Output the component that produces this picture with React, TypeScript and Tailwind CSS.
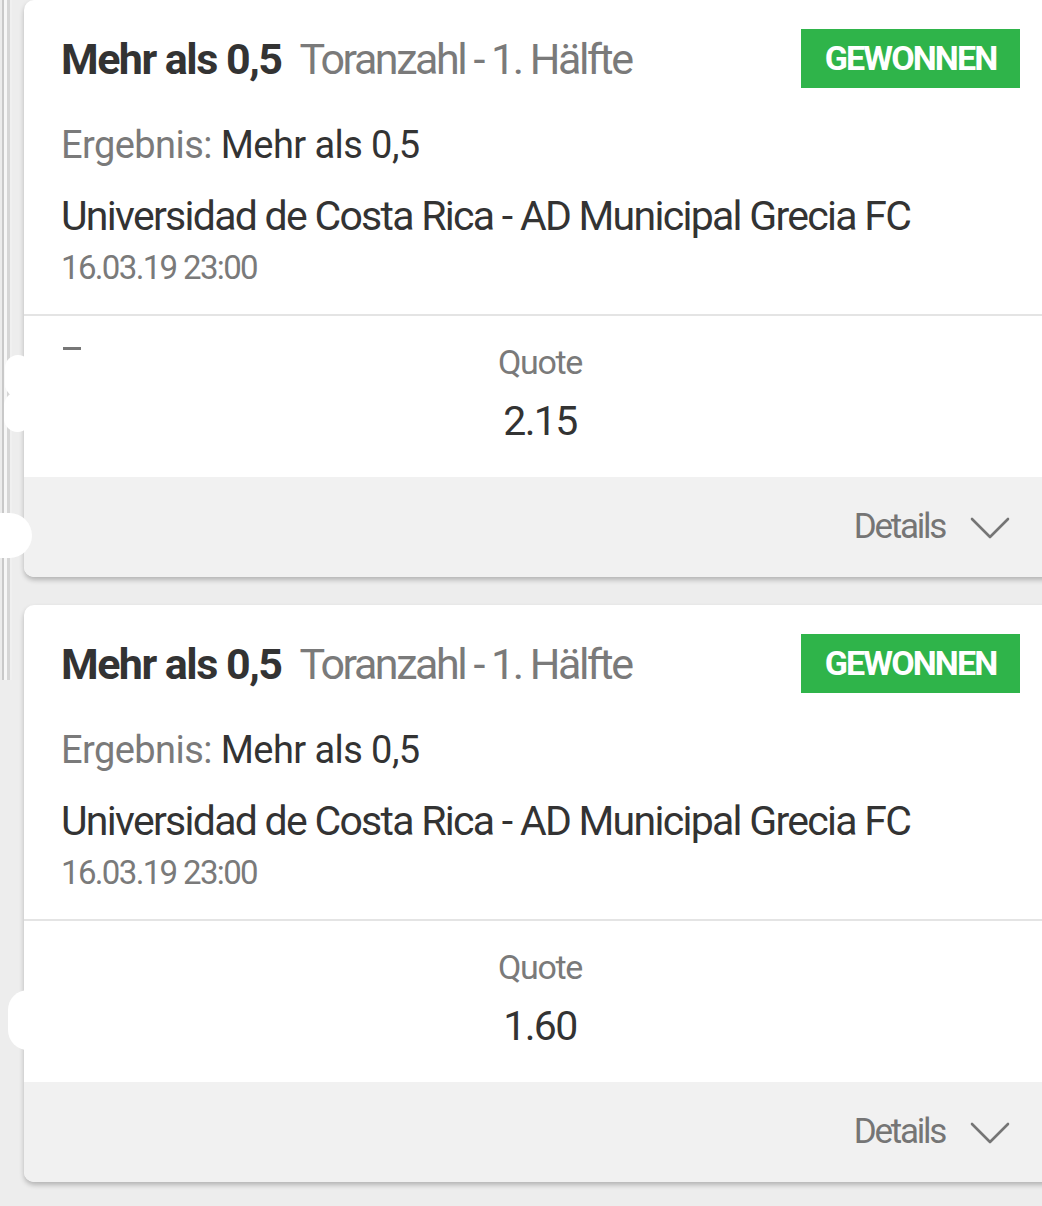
import React from "react";

function Chevron() {
  return (
    <svg width="40" height="24" viewBox="0 0 40 24" fill="none">
      <path d="M2 3 L20 21 L38 3" stroke="#757575" strokeWidth="2.6" strokeLinecap="round" strokeLinejoin="round" />
    </svg>
  );
}

function Card({ quote }: { quote: string }) {
  return (
    <div className="w-[1032px] shrink-0 rounded-[10px] bg-white shadow-[0_3px_5px_rgba(0,0,0,0.24)] overflow-hidden">
      <div className="pl-[37px] pr-[36px] pt-[29px] pb-[26px]">
        <div className="flex items-center justify-between h-[59px]">
          <div className="text-[43px] leading-[52px] whitespace-nowrap">
            <span className="font-bold text-[#333333] tracking-[-0.035em]">Mehr als 0,5</span>
            <span className="text-[#7a7a7a] ml-[18px] tracking-[-0.057em]">Toranzahl - 1. Hälfte</span>
          </div>
          <div className="w-[219px] h-[59px] bg-[#2fb44a] flex items-center justify-center text-white font-bold text-[34px] tracking-[-0.055em]">
            GEWONNEN
          </div>
        </div>
        <div className="mt-[34px] text-[38px] leading-[46px] tracking-[-0.015em] whitespace-nowrap">
          <span className="text-[#7a7a7a]">Ergebnis: </span>
          <span className="text-[#333333]">Mehr als 0,5</span>
        </div>
        <div className="mt-[24px] text-[41px] leading-[48px] tracking-[-0.042em] text-[#333333] whitespace-nowrap">
          Universidad de Costa Rica - AD Municipal Grecia FC
        </div>
        <div className="mt-[8px] text-[33px] leading-[40px] tracking-[-0.05em] text-[#7a7a7a] whitespace-nowrap">
          16.03.19 23:00
        </div>
      </div>
      <div className="h-[2px] bg-[#e4e4e4]" />
      <div className="relative flex flex-col items-center pt-[26px] pb-[32px]">
        <div className="text-[34px] leading-[40px] tracking-[-0.04em] text-[#7a7a7a]">Quote</div>
        <div className="mt-[15px] text-[41px] leading-[48px] tracking-[-0.04em] text-[#333333]">{quote}</div>
      </div>
      <div className="h-[100px] bg-[#f1f1f1] flex items-center justify-end pr-[46px]">
        <span className="text-[35px] tracking-[-0.065em] text-[#757575]">Details</span>
        <span className="ml-[25px] mt-[2px] flex">
          <Chevron />
        </span>
      </div>
    </div>
  );
}

export default function App() {
  return (
    <div
      className="relative w-[1042px] h-[1206px] overflow-hidden bg-[#ededed]"
      style={{ fontFamily: "Roboto, 'Noto Sans', sans-serif" }}
    >
      <div className="absolute left-0 top-0 h-[680px] w-[12px] flex">
        <div className="w-[2px] h-full bg-[#ececec]" />
        <div className="w-[2px] h-full bg-[#c9c9c9]" />
        <div className="w-[3px] h-full bg-[#f7f7f7]" />
        <div className="w-[3px] h-full bg-[#d6d6d6]" />
        <div className="w-[2px] h-full bg-[#f0f0f0]" />
      </div>
      <div className="flex flex-col gap-[28px] pl-[24px]">
        <Card quote="2.15" />
        <Card quote="1.60" />
      </div>
      <div className="absolute left-[63px] top-[347px] w-[18px] h-[3px] bg-[#777777]" />
      <div className="absolute left-[5px] top-[355px] w-[26px] h-[42px] rounded-full bg-white" />
      <div className="absolute left-[4px] top-[392px] w-[27px] h-[40px] rounded-full bg-white" />
      <div className="absolute left-0 top-[513px] w-[32px] h-[45px] rounded-r-full bg-white" />
      <div className="absolute left-[8px] top-[990px] w-[40px] h-[60px] rounded-full bg-white" />
    </div>
  );
}
